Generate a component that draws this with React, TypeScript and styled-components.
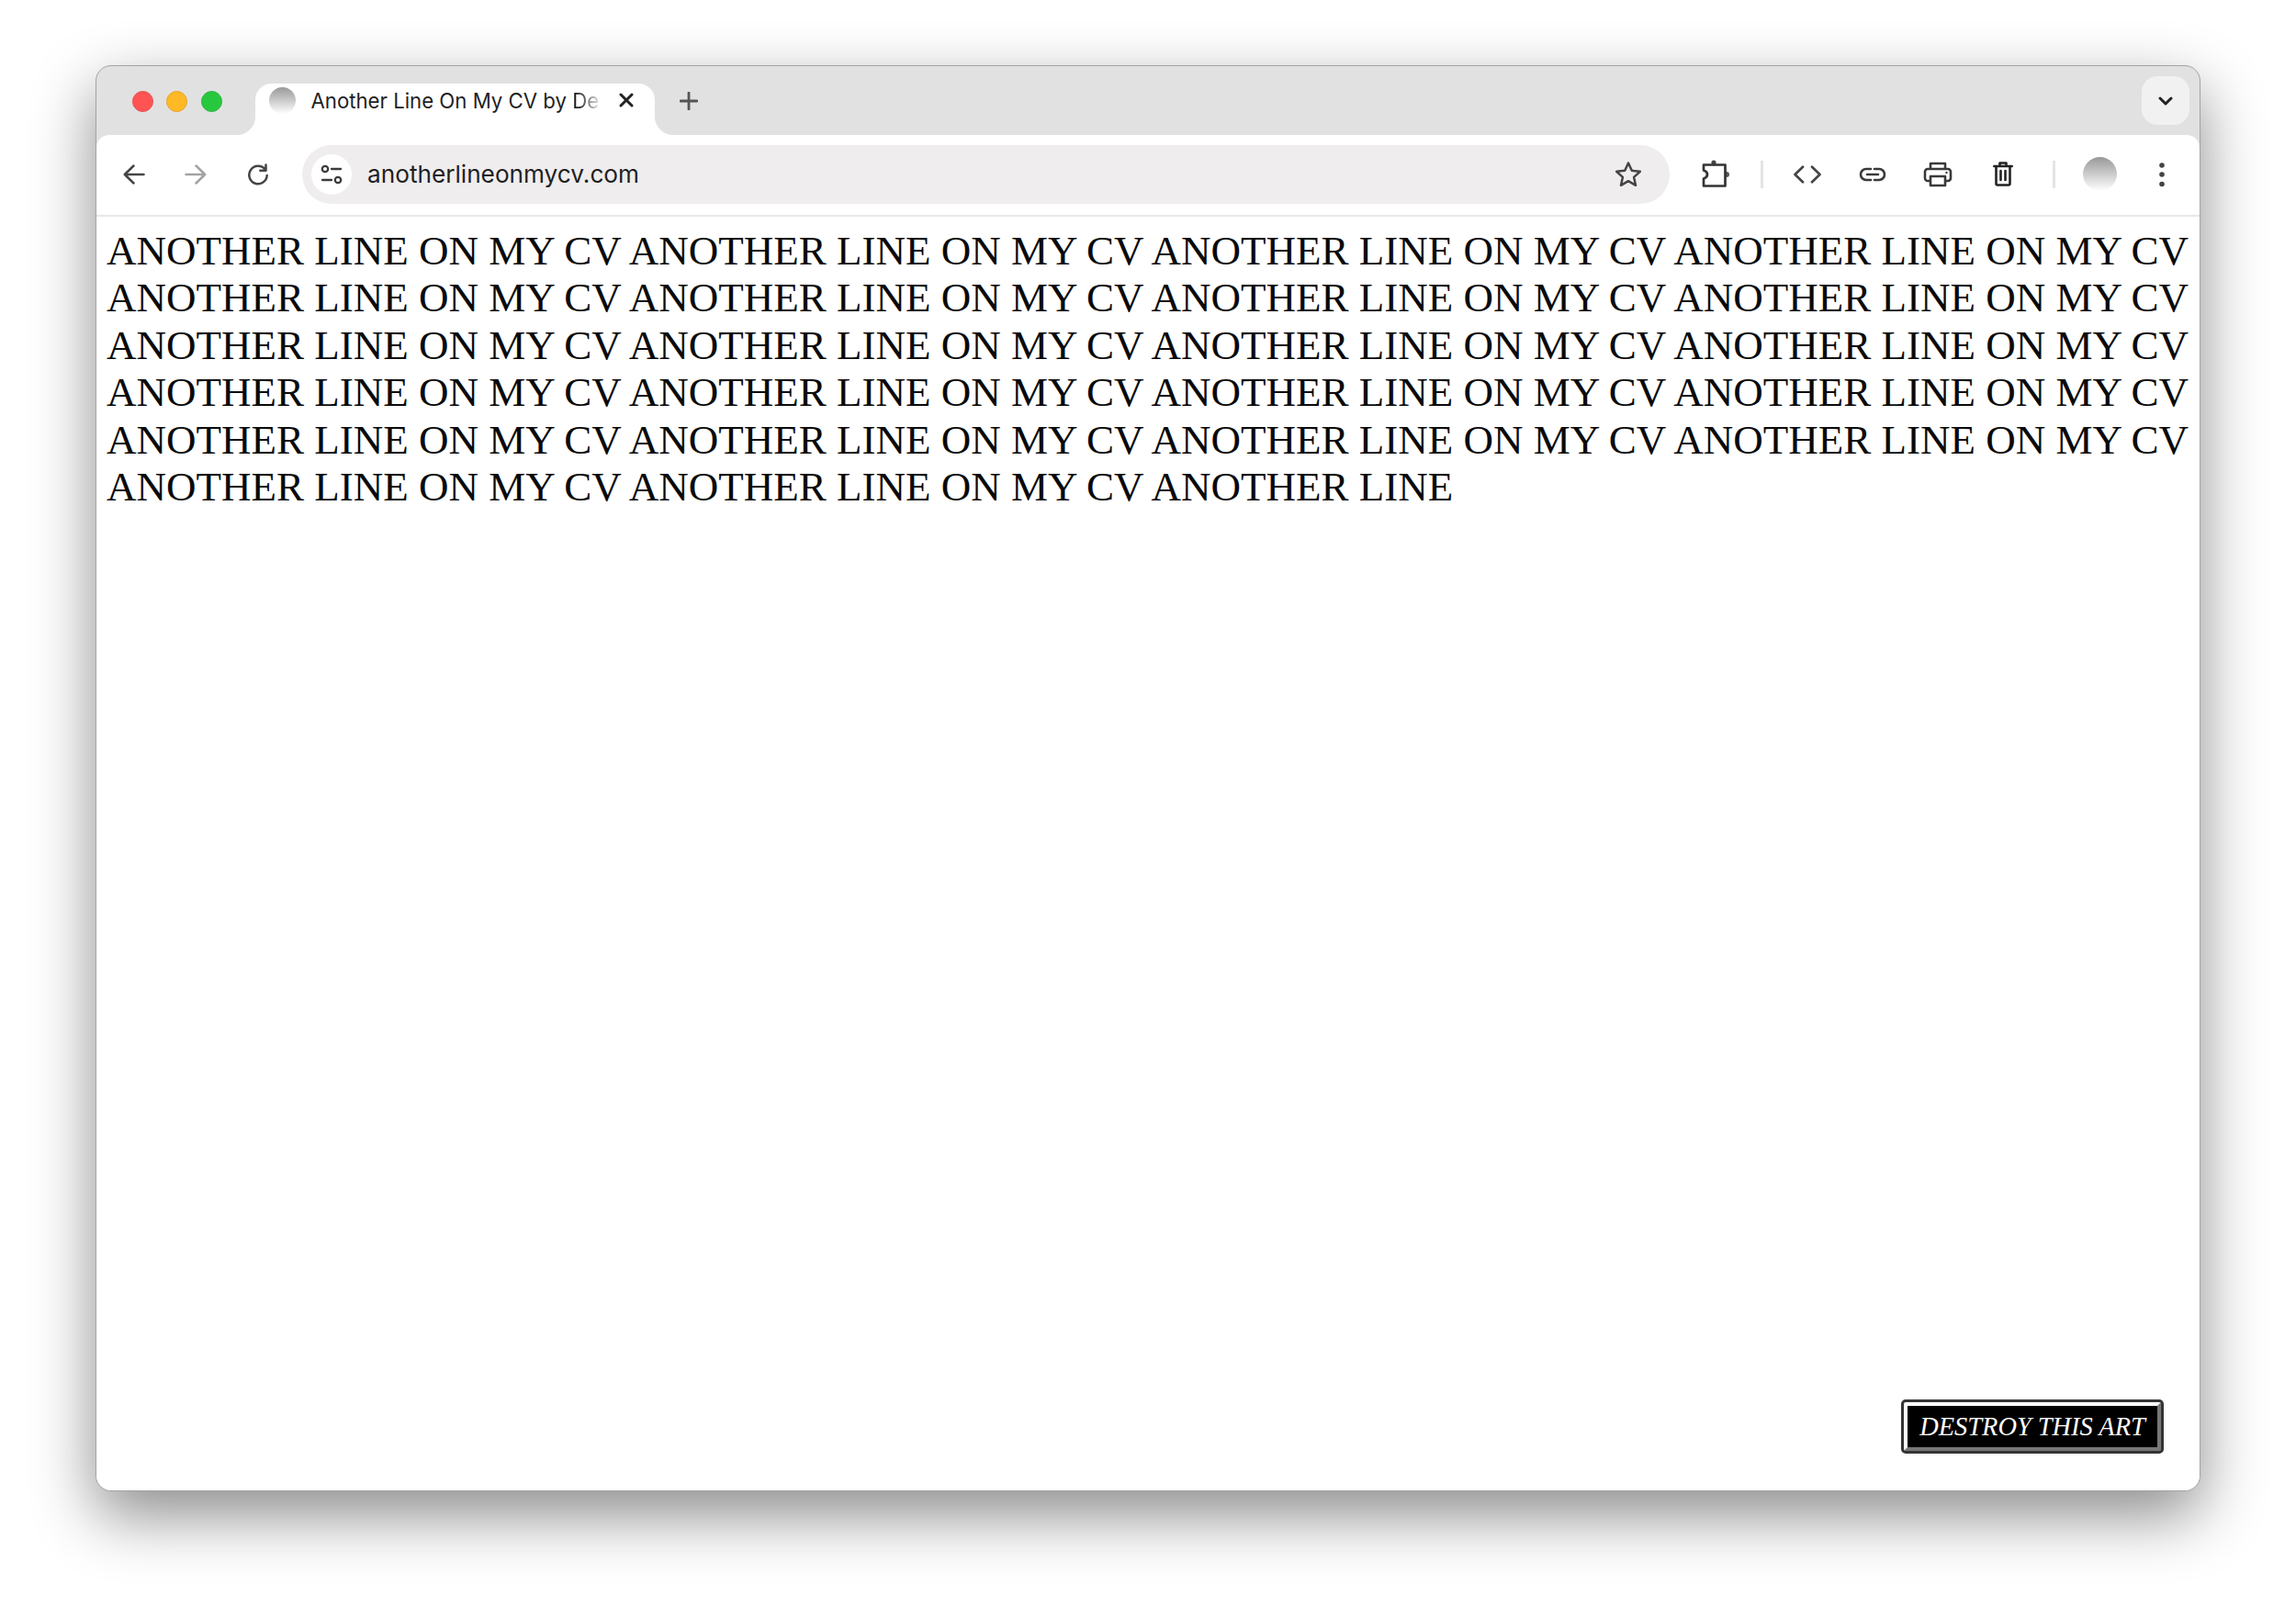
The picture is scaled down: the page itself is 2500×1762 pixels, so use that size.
import React from "react";
import styled, { createGlobalStyle } from "styled-components";

const Global = createGlobalStyle`
  html, body { margin: 0; padding: 0; background: #fff; }
  * { box-sizing: border-box; }
`;

const Page = styled.div`
  width: 2500px;
  height: 1762px;
  padding: 71px 104px 138px;
  background: #fff;
  overflow: hidden;
`;

const Window = styled.div`
  height: 1553px;
  display: flex;
  flex-direction: column;
  background: #e1e1e1;
  border: 1px solid #a3a3a3;
  border-radius: 17px;
  box-shadow: 0 26px 68px rgba(0, 0, 0, 0.46);
  overflow: hidden;
`;

const TabBar = styled.div`
  flex: none;
  height: 75px;
  display: flex;
  align-items: center;
  padding: 0 11px 0 38.5px;
`;

const Lights = styled.div`
  display: flex;
  gap: 14.5px;
  margin: 2px 36px 0 0;
`;

const Light = styled.span<{ $c: string; $b: string }>`
  width: 23px;
  height: 23px;
  border-radius: 50%;
  background: ${(p) => p.$c};
  border: 1px solid ${(p) => p.$b};
`;

const Tab = styled.div`
  position: relative;
  align-self: flex-end;
  width: 435px;
  height: 56px;
  display: flex;
  align-items: center;
  padding: 0 23px 20px 15px;
  background: #fff;
  border-radius: 18px 18px 0 0;
  &::before,
  &::after {
    content: "";
    position: absolute;
    bottom: 0;
    width: 20px;
    height: 20px;
  }
  &::before {
    left: -20px;
    background: radial-gradient(circle at 0 0, #e1e1e1 19.5px, #fff 20.5px);
  }
  &::after {
    right: -20px;
    background: radial-gradient(circle at 100% 0, #e1e1e1 19.5px, #fff 20.5px);
  }
`;

const Blob = styled.span<{ $d: number }>`
  flex: none;
  width: ${(p) => p.$d}px;
  height: ${(p) => p.$d}px;
  border-radius: 50%;
  background: linear-gradient(#989898, #ffffff);
`;

const TabTitle = styled.span`
  flex: 1;
  min-width: 0;
  margin-left: 17px;
  font: 400 22.2px "Inter", "Liberation Sans", sans-serif;
  color: #1f1f1f;
  white-space: nowrap;
`;

const TitleFade = styled.span`
  -webkit-mask-image: linear-gradient(90deg, #000 20%, rgba(0, 0, 0, 0.15) 100%);
  mask-image: linear-gradient(90deg, #000 20%, rgba(0, 0, 0, 0.15) 100%);
`;

const Plain = styled.svg`
  flex: none;
  display: block;
  fill: none;
  stroke-linecap: round;
  stroke-linejoin: round;
`;

const PlusSlot = styled.span`
  margin-left: 27px;
  width: 20px;
  display: flex;
  justify-content: center;
`;

const ListButton = styled.span`
  margin-left: auto;
  width: 52px;
  height: 53px;
  border-radius: 17px;
  background: #f1f1f1;
  display: flex;
  align-items: center;
  justify-content: center;
`;

const Toolbar = styled.div`
  flex: none;
  height: 89px;
  display: flex;
  align-items: center;
  padding: 0 0 2px 7px;
  background: #fff;
  border-bottom: 2px solid #e8e8e8;
  border-radius: 14px 14px 0 0;
`;

const NavSlot = styled.span`
  flex: none;
  width: 67.5px;
  display: flex;
  justify-content: center;
`;

const Omnibox = styled.div`
  flex: 1;
  min-width: 0;
  height: 64px;
  margin-left: 14.5px;
  padding: 0 30px 0 10px;
  display: flex;
  align-items: center;
  border-radius: 32px;
  background: #efedee;
`;

const SiteChip = styled.span`
  flex: none;
  width: 44px;
  height: 44px;
  border-radius: 50%;
  background: #fff;
  display: flex;
  align-items: center;
  justify-content: center;
`;

const Url = styled.span`
  flex: 1;
  margin: 1px 0 0 17px;
  font: 400 26.2px/32px "Inter", "Liberation Sans", sans-serif;
  color: #1f1f1f;
`;

const ExtSlot = styled.span`
  flex: none;
  width: 50px;
  margin-left: 25px;
  display: flex;
  justify-content: center;
`;

const Separator = styled.span<{ $ml: number }>`
  flex: none;
  width: 3px;
  height: 30px;
  margin-left: ${(p) => p.$ml}px;
  background: #e4e4e4;
`;

const ActionSlot = styled.span`
  flex: none;
  width: 71px;
  display: flex;
  align-items: center;
  justify-content: center;
`;

const Actions = styled.div`
  flex: none;
  margin-left: 13px;
  display: flex;
  align-items: center;
`;

const AvatarSlot = styled.span`
  flex: none;
  margin-left: 30px;
  display: flex;
`;

const MenuSlot = styled.span`
  flex: none;
  width: 20px;
  margin: 0 31px 0 39.5px;
  display: flex;
  justify-content: center;
`;

const Content = styled.main`
  position: relative;
  flex: 1;
  min-height: 0;
  padding: 11.5px 8px 0 11px;
  background: #fff;
`;

const Art = styled.p`
  margin: 0;
  font: 400 45px/51.6px "Liberation Serif", "Times New Roman", serif;
  color: #0a0a0a;
`;

const Destroy = styled.button`
  position: absolute;
  right: 42px;
  bottom: 43px;
  width: 280px;
  height: 53px;
  padding: 0;
  background: #000;
  color: #fff;
  border: 4px solid;
  border-color: #fff #777 #777 #fff;
  outline: 3px solid #343434;
  border-radius: 2px;
  font: italic 400 28.4px "Liberation Serif", "Times New Roman", serif;
  white-space: nowrap;
`;

const Back = ({ c }: { c: string }) => (
  <Plain width="24" height="22" viewBox="0 0 24 22" stroke={c} strokeWidth="2.5">
    <path d="M22.5 11H1.8M11.5 1.5 1.8 11l9.7 9.5" />
  </Plain>
);
const Forward = ({ c }: { c: string }) => (
  <Plain width="24" height="22" viewBox="0 0 24 22" stroke={c} strokeWidth="2.5">
    <path d="M1.5 11h20.7M12.5 1.5l9.7 9.5-9.7 9.500" />
  </Plain>
);

const repeats = Array(22).fill("ANOTHER LINE ON MY CV").join(" ") + " ANOTHER LINE";

export default function App() {
  return (
    <Page>
      <Global />
      <Window>
        <TabBar>
          <Lights>
            <Light $c="#ff5453" $b="#e5504e" />
            <Light $c="#ffb826" $b="#e5a52a" />
            <Light $c="#28c83e" $b="#2ab640" />
          </Lights>
          <Tab>
            <Blob $d={29} />
            <TabTitle>
              Another Line On My CV by <TitleFade>De</TitleFade>
            </TabTitle>
            <Plain width="16" height="16" viewBox="0 0 16 16" stroke="#222" strokeWidth="3">
              <path d="M2 2l12 12M14 2 2 14" />
            </Plain>
          </Tab>
          <PlusSlot>
            <Plain width="20" height="20" viewBox="0 0 20 20" stroke="#555" strokeWidth="2.8">
              <path d="M10 1v18M1 10h18" />
            </Plain>
          </PlusSlot>
          <ListButton>
            <Plain width="16" height="10" viewBox="0 0 16 10" stroke="#222" strokeWidth="3">
              <path d="M2 2l6 6 6-6" />
            </Plain>
          </ListButton>
        </TabBar>
        <Toolbar>
          <NavSlot>
            <Back c="#454545" />
          </NavSlot>
          <NavSlot>
            <Forward c="#a3a3a3" />
          </NavSlot>
          <NavSlot>
            <Plain width="24" height="24" viewBox="0 0 24 24" stroke="#454545" strokeWidth="2.5">
              <path d="M19.6 6.5A9.7 9.7 0 1 0 21.7 13M20.5 1.5v6.2h-6.2" />
            </Plain>
          </NavSlot>
          <Omnibox>
            <SiteChip>
              <Plain width="26" height="24" viewBox="0 0 26 24" stroke="#3c3c3c" strokeWidth="2.3">
                <circle cx="6" cy="6" r="3.2" />
                <path d="M13 6h10M3 18h10" />
                <circle cx="20" cy="18" r="3.2" />
              </Plain>
            </SiteChip>
            <Url>anotherlineonmycv.com</Url>
            <Plain width="30" height="29" viewBox="0 0 30 29" stroke="#454545" strokeWidth="2.5">
              <path d="M15 2.5l3.8 8.3 9 1-6.7 6.1 1.9 8.9-8-4.6-8 4.6 1.9-8.9-6.7-6.1 9-1z" />
            </Plain>
          </Omnibox>
          <ExtSlot>
            <Plain width="35" height="35" viewBox="0 0 35 35" stroke="#333" strokeWidth="2.7">
              <circle cx="16" cy="5" r="2.6" fill="#444" stroke="none" />
              <circle cx="30" cy="18" r="3" fill="#555" stroke="none" />
              <path d="M5 7.5h23.5v23H5v-8c3-1 4-2.500 4-4.500s-1-3.500-4-4.500z" fill="#fff" />
            </Plain>
          </ExtSlot>
          <Separator $ml={24} />
          <Actions>
            <ActionSlot>
              <Plain width="32" height="20" viewBox="0 0 32 20" stroke="#454545" strokeWidth="2.7">
                <path d="M11 1.800 2.500 10 11 18.200M21 1.800 29.500 10 21 18.200" />
              </Plain>
            </ActionSlot>
            <ActionSlot>
              <Plain width="30" height="16" viewBox="0 0 30 16" stroke="#3a3a3a" strokeWidth="2.6">
                <path d="M13 2H8a6 6 0 0 0 0 12h5M17 2h5a6 6 0 0 1 0 12h-5M9 8h12" />
              </Plain>
            </ActionSlot>
            <ActionSlot>
              <Plain width="32" height="28" viewBox="0 0 32 28" stroke="#3a3a3a" strokeWidth="2.6">
                <path d="M8 8V2h16v6M8 21H5a3 3 0 0 1-3-3v-7a3 3 0 0 1 3-3h22a3 3 0 0 1 3 3v7a3 3 0 0 1-3 3h-3" />
                <rect x="8" y="16" width="16" height="10" fill="#fff" />
                <circle cx="25.500" cy="12" r="1.200" fill="#3a3a3a" stroke="none" />
              </Plain>
            </ActionSlot>
            <ActionSlot>
              <Plain width="22" height="27" viewBox="0 0 22 27" stroke="#222" strokeWidth="2.6">
                <path d="M1.300 5h19.400M7.500 4V1.500h7V4M3.500 5v19a1.500 1.500 0 0 0 1.500 1.500h12a1.500 1.500 0 0 0 1.500-1.500V5M8.500 10v10M13.500 10v10" />
              </Plain>
            </ActionSlot>
          </Actions>
          <Separator $ml={18} />
          <AvatarSlot>
            <Blob $d={37} />
          </AvatarSlot>
          <MenuSlot>
            <Plain width="8" height="28" viewBox="0 0 8 28">
              <circle cx="4" cy="4" r="2.800" fill="#444" />
              <circle cx="4" cy="14" r="2.800" fill="#444" />
              <circle cx="4" cy="24.500" r="2.800" fill="#444" />
            </Plain>
          </MenuSlot>
        </Toolbar>
        <Content>
          <Art>{repeats}</Art>
          <Destroy>DESTROY THIS ART</Destroy>
        </Content>
      </Window>
    </Page>
  );
}
